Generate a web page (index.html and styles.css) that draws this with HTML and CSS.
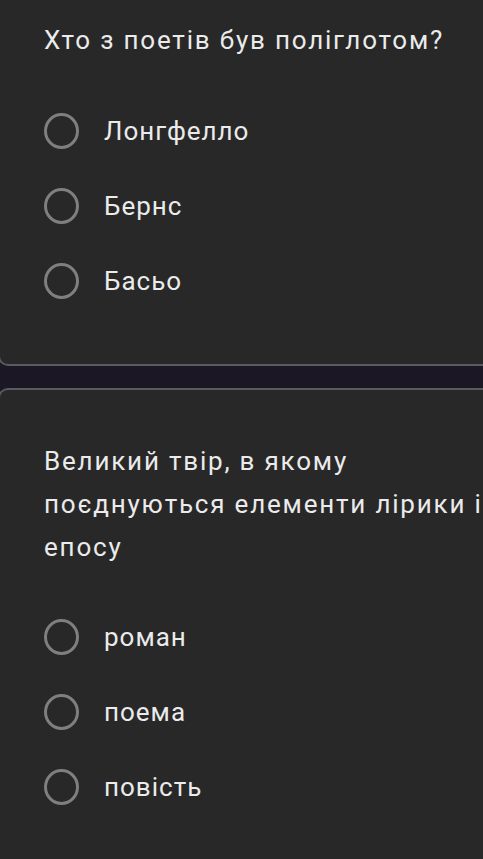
FILE: index.html
```html
<!DOCTYPE html>
<html lang="uk">
<head>
<meta charset="utf-8">
<link rel="stylesheet" href="styles.css">
</head>
<body>
<div class="page">
  <section class="card card-first">
    <div class="question">Хто з поетів був поліглотом?</div>
    <div class="options">
      <label class="option"><span class="radio"></span><span class="label">Лонгфелло</span></label>
      <label class="option"><span class="radio"></span><span class="label">Бернс</span></label>
      <label class="option"><span class="radio"></span><span class="label">Басьо</span></label>
    </div>
  </section>
  <section class="card card-second">
    <div class="question">Великий твір, в якому<br>поєднуються елементи лірики і<br>епосу</div>
    <div class="options">
      <label class="option"><span class="radio"></span><span class="label">роман</span></label>
      <label class="option"><span class="radio"></span><span class="label">поема</span></label>
      <label class="option"><span class="radio"></span><span class="label">повість</span></label>
    </div>
  </section>
</div>
</body>
</html>
```
FILE: styles.css
```css
html, body {
  margin: 0;
  padding: 0;
  background: #1b1725;
  overflow: hidden;
  height: 859px;
}
.page {
  display: flex;
  flex-direction: column;
  gap: 22px;
  width: 483px;
  overflow: hidden;
  font-family: Roboto, "Noto Sans", sans-serif;
  color: #ebebeb;
}
.card {
  background: #282828;
  border: 2px solid #5a5a5f;
  margin-left: -2px;
  width: 540px;
  box-sizing: border-box;
  padding-left: 44px;
}
.card-first {
  border-top: none;
  border-radius: 0 0 10px 10px;
  padding-top: 19px;
  padding-bottom: 46px;
}
.card-second {
  border-bottom: none;
  border-radius: 10px 10px 0 0;
  padding-top: 50px;
  height: 480px;
}
.question {
  font-size: 26px;
  line-height: 43px;
  white-space: nowrap;
  letter-spacing: 1.8px;
}
.card-first .options { margin-top: 31px; }
.card-second .options { margin-top: 30px; }
.options {
  display: flex;
  flex-direction: column;
}
.option {
  display: flex;
  align-items: center;
  height: 75px;
}
.radio {
  width: 35px;
  height: 36px;
  box-sizing: border-box;
  border: 3px solid #7f7f7f;
  border-radius: 50%;
  flex: none;
}
.label {
  margin-left: 25px;
  font-size: 26px;
  letter-spacing: 1px;
}
```
